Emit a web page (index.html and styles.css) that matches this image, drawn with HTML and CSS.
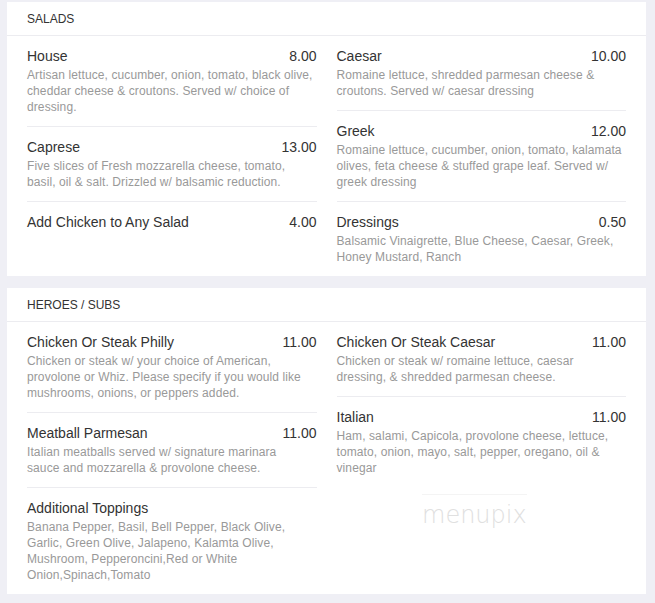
FILE: index.html
```html
<!DOCTYPE html>
<html>
<head>
<meta charset="utf-8">
<link rel="stylesheet" href="styles.css">
</head>
<body>
<div class="page">
  <section class="card first">
    <h2 class="card-head">SALADS</h2>
    <div class="cols">
      <div class="col">
        <div class="item">
          <div class="row"><span>House</span><span>8.00</span></div>
          <p class="desc">Artisan lettuce, cucumber, onion, tomato, black olive,<br>cheddar cheese &amp; croutons. Served w/ choice of<br>dressing.</p>
        </div>
        <div class="item">
          <div class="row"><span>Caprese</span><span>13.00</span></div>
          <p class="desc">Five slices of Fresh mozzarella cheese, tomato,<br>basil, oil &amp; salt. Drizzled w/ balsamic reduction.</p>
        </div>
        <div class="item">
          <div class="row"><span>Add Chicken to Any Salad</span><span>4.00</span></div>
        </div>
      </div>
      <div class="col">
        <div class="item">
          <div class="row"><span>Caesar</span><span>10.00</span></div>
          <p class="desc">Romaine lettuce, shredded parmesan cheese &amp;<br>croutons. Served w/ caesar dressing</p>
        </div>
        <div class="item">
          <div class="row"><span>Greek</span><span>12.00</span></div>
          <p class="desc">Romaine lettuce, cucumber, onion, tomato, kalamata<br>olives, feta cheese &amp; stuffed grape leaf. Served w/<br>greek dressing</p>
        </div>
        <div class="item">
          <div class="row"><span>Dressings</span><span>0.50</span></div>
          <p class="desc">Balsamic Vinaigrette, Blue Cheese, Caesar, Greek,<br>Honey Mustard, Ranch</p>
        </div>
      </div>
    </div>
  </section>
  <section class="card second">
    <h2 class="card-head">HEROES / SUBS</h2>
    <div class="cols">
      <div class="col">
        <div class="item">
          <div class="row"><span>Chicken Or Steak Philly</span><span>11.00</span></div>
          <p class="desc">Chicken or steak w/ your choice of American,<br>provolone or Whiz. Please specify if you would like<br>mushrooms, onions, or peppers added.</p>
        </div>
        <div class="item">
          <div class="row"><span>Meatball Parmesan</span><span>11.00</span></div>
          <p class="desc">Italian meatballs served w/ signature marinara<br>sauce and mozzarella &amp; provolone cheese.</p>
        </div>
        <div class="item">
          <div class="row"><span>Additional Toppings</span><span></span></div>
          <p class="desc">Banana Pepper, Basil, Bell Pepper, Black Olive,<br>Garlic, Green Olive, Jalapeno, Kalamta Olive,<br>Mushroom, Pepperoncini,Red or White<br>Onion,Spinach,Tomato</p>
        </div>
      </div>
      <div class="col">
        <div class="item">
          <div class="row"><span>Chicken Or Steak Caesar</span><span>11.00</span></div>
          <p class="desc">Chicken or steak w/ romaine lettuce, caesar<br>dressing, &amp; shredded parmesan cheese.</p>
        </div>
        <div class="item">
          <div class="row"><span>Italian</span><span>11.00</span></div>
          <p class="desc">Ham, salami, Capicola, provolone cheese, lettuce,<br>tomato, onion, mayo, salt, pepper, oregano, oil &amp;<br>vinegar</p>
        </div>
      </div>
    </div>
    <div class="watermark">menupix</div>
  </section>
</div>
</body>
</html>
```

FILE: styles.css
```css
html, body {
  margin: 0;
  padding: 0;
}
body {
  background: #efeff5;
  font-family: "Liberation Sans", Arial, sans-serif;
  color: #333;
}
.page {
  padding: 2px 9px 0 7px;
}
.card {
  background: #fff;
  position: relative;
}
.card.second {
  margin-top: 12px;
}
.card-head {
  margin: 0;
  padding: 9px 20px 8px;
  font-size: 12px;
  line-height: 16px;
  font-weight: normal;
  color: #333;
  border-bottom: 1px solid #ececf0;
}
.cols {
  display: grid;
  grid-template-columns: 1fr 1fr;
  column-gap: 20px;
  padding: 0 20px;
}
.item {
  padding: 10px 0 11px;
  border-bottom: 1px solid #ececf0;
}
.item:last-child {
  border-bottom: none;
}
.row {
  display: flex;
  justify-content: space-between;
  font-size: 14px;
  line-height: 20px;
  color: #333;
}
.desc {
  margin: 1px 0 0;
  font-size: 12px;
  line-height: 16px;
  letter-spacing: 0.1px;
  color: #999;
}
.watermark {
  position: absolute;
  left: 415px;
  top: 206px;
  font-family: "DejaVu Sans", sans-serif;
  font-weight: 200;
  font-size: 24px;
  color: #e0e0e0;
  padding-top: 6px;
  border-top: 1px solid #f4f4f4;
}
```
